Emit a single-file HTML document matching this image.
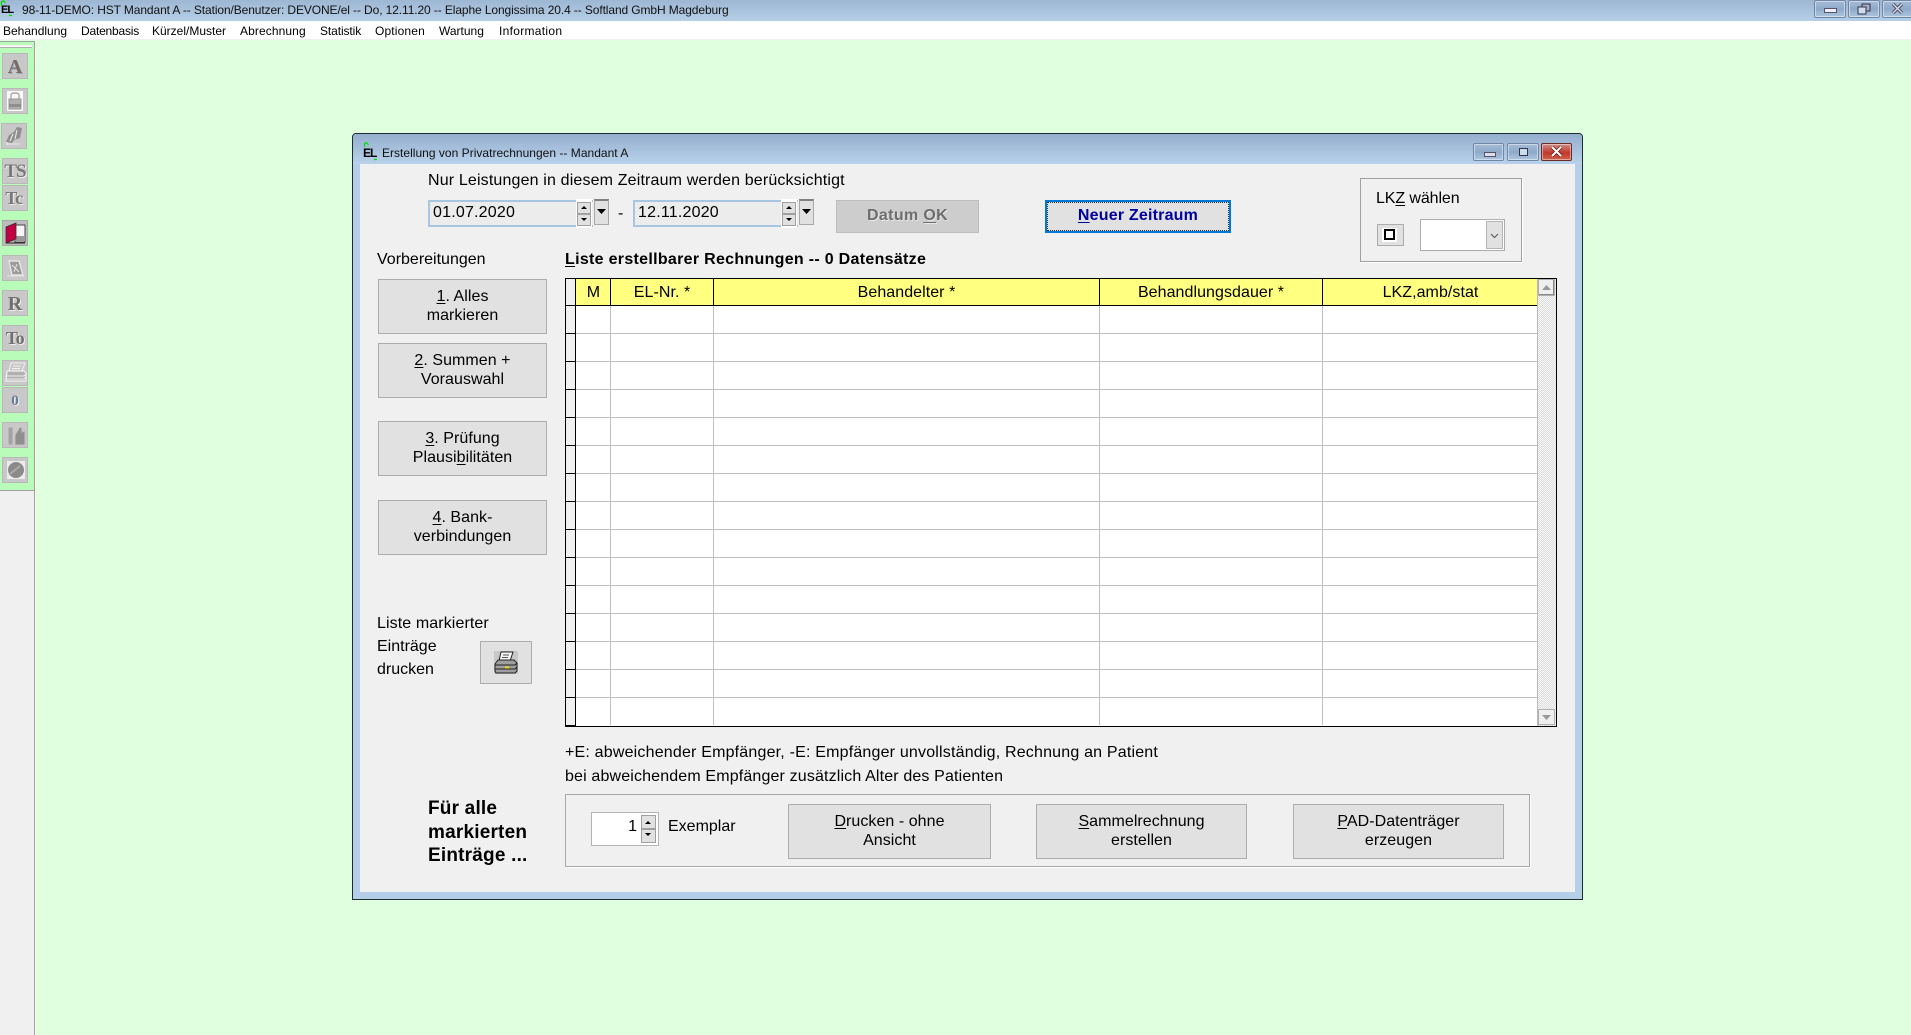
<!DOCTYPE html>
<html lang="de"><head><meta charset="utf-8"><title>Elaphe Longissima</title>
<style>
html,body{margin:0;padding:0}
body{width:1911px;height:1035px;overflow:hidden;position:relative;background:#dfffdf;font-family:"Liberation Sans",Arial,sans-serif;font-size:16px;color:#000}
div,span.a,svg{position:absolute}
.t{white-space:nowrap;line-height:20px}
.u{text-decoration:underline;text-underline-offset:2px}
.btn{background:#e1e1e1;border:1px solid #adadad;box-sizing:border-box;display:flex;align-items:center;justify-content:center;text-align:center;line-height:18.6px;letter-spacing:.05px}
.menu{font-size:12px;top:22px;line-height:18px;white-space:nowrap;color:#000}
.tb{left:2px;width:26px;height:26px;background:#c8c8c8;border:1px solid #b8b8b8;box-sizing:border-box}
.tbt{font-family:"Liberation Serif",serif;font-weight:bold;color:#777;text-align:center;width:100%;left:0;text-shadow:1px 1px 0 #eee}
.wb{box-sizing:border-box;border:1px solid #6f87a4;border-radius:2px;box-shadow:inset 0 0 0 1px rgba(255,255,255,.45);background:linear-gradient(#a5bcd8,#8ea9c9 50%,#adc6e0)}
.arrowbox{background:#e1e1e1;border:1px solid #a0a0a0;box-sizing:border-box}
.h{top:280px;height:24px;line-height:25px;text-align:center;font-size:16px;white-space:nowrap;letter-spacing:.06px}
.vg{top:306px;width:1px;height:419px;background:#c0c0c0}
</style></head>
<body>
<!-- main title bar -->
<div style="left:0;top:0;width:1911px;height:21px;background:linear-gradient(#9db6d2,#b6cfe8)"></div>
<div style="left:1px;top:3px;width:10px;height:13px;color:#000;font:bold 11px/14px 'Liberation Sans',sans-serif;letter-spacing:-1px">EL</div>
<svg style="left:0;top:0" width="14" height="18"><path d="M1.500 6V2L3.500 .8 5.500 3M9 15.500h3" stroke="#00e000" fill="none" stroke-width="1.200"/></svg>
<div class="t" style="left:22px;top:0;font-size:12px;color:#111;line-height:20px;letter-spacing:-.105px">98-11-DEMO: HST Mandant A -- Station/Benutzer: DEVONE/el -- Do, 12.11.20 -- Elaphe Longissima 20.4 -- Softland GmbH Magdeburg</div>
<div class="wb" style="left:1814px;top:0;width:32px;height:18px"></div>
<div style="left:1824px;top:8px;width:11px;height:3px;background:#eef;border:1px solid #556"></div>
<div class="wb" style="left:1848px;top:0;width:32px;height:18px"></div>
<svg style="left:1856px;top:2px" width="16" height="14"><rect x="6" y="2" width="8" height="7" fill="#aac" stroke="#334"/><rect x="2" y="5" width="8" height="7" fill="#cde" stroke="#334"/></svg>
<div class="wb" style="left:1882px;top:0;width:32px;height:18px"></div>
<svg style="left:1891px;top:2px" width="14" height="14"><path d="M2 2L11 11M11 2L2 11" stroke="#445" stroke-width="3.200"/><path d="M2 2L11 11M11 2L2 11" stroke="#dde" stroke-width="1.400"/></svg>
<!-- menu -->
<div style="left:0;top:21px;width:1911px;height:18px;background:#fff"></div>
<div style="left:0;top:39px;width:1911px;height:1px;background:#f0f0f0"></div>
<div class="menu" style="left:3px">Behandlung</div>
<div class="menu" style="left:81px;letter-spacing:-.2px">Datenbasis</div>
<div class="menu" style="left:152px">Kürzel/Muster</div>
<div class="menu" style="left:240px;letter-spacing:.1px">Abrechnung</div>
<div class="menu" style="left:320px;letter-spacing:-.1px">Statistik</div>
<div class="menu" style="left:375px;letter-spacing:.15px">Optionen</div>
<div class="menu" style="left:439px">Wartung</div>
<div class="menu" style="left:499px;letter-spacing:.3px">Information</div>
<!-- toolbar -->
<div style="left:0;top:41px;width:34px;height:449px;background:#b9fcb9"></div>
<div style="left:0;top:490px;width:34px;height:545px;background:#f0f0f0;border-top:1px solid #a0a0a0;box-sizing:border-box"></div>
<div style="left:34px;top:41px;width:1px;height:994px;background:#a0a0a0"></div>
<div style="left:35px;top:41px;width:1px;height:994px;background:#f4fff4"></div>
<div style="left:0;top:41px;width:34px;height:1px;background:#a0a0a0"></div>
<div style="left:0;top:45px;width:32px;height:3px;background:#f4f4f4;border-bottom:1px solid #b0b0b0;box-sizing:border-box"></div>

<div class="tb" style="top:53px"><div class="tbt" style="top:1px;font-size:20px;line-height:24px;color:#7a6a62;text-shadow:1px 1px 0 #9ab">A</div></div>
<div class="tb" style="top:88px"><svg style="left:4px;top:2px" width="16" height="20"><rect width="16" height="20" fill="#f8f8f8"/><path d="M4 8V4q0-2 4-2t4 2v4" fill="none" stroke="#aaa" stroke-width="1.400"/><rect x="2" y="8" width="12" height="10" fill="#b0b0b0" stroke="#999"/><rect x="2" y="13" width="12" height="3" fill="#8e8e8e"/></svg></div>
<div class="tb" style="top:123px;left:1px"><svg style="left:2px;top:2px" width="20" height="20"><path d="M2 16L5 9l5-3 3-5 5 1-2 10-6 2-2 3z" fill="#8f8f8f"/><path d="M6 15L9 8M11 13L13 4M2 18h14M3 16v3" stroke="#e8e8e8" stroke-width="1.100" fill="none"/></svg></div>
<div class="tb" style="top:158px"><div class="tbt" style="top:1px;font-size:19px;line-height:24px;letter-spacing:-1px">TS</div></div>
<div class="tb" style="top:185px"><div class="tbt" style="top:0;font-size:18px;line-height:24px;letter-spacing:-.5px;left:-1px">Tc</div></div>
<div class="tb" style="top:220px;background:#bdbdbd;border-color:#a8a8a8"><svg style="left:2px;top:1px" width="21" height="23"><rect x="10" y="3" width="10" height="17" fill="#f4f4f4" stroke="#444"/><path d="M11 14h8v5h-8z" fill="#999"/><path d="M1 5L11 1V17L1 21z" fill="#c00040" stroke="#333" stroke-width=".8"/><path d="M1 21h19" stroke="#222"/></svg></div>
<div class="tb" style="top:255px"><svg style="left:3px;top:2px" width="20" height="21"><path d="M3 3h10l4 14H6z" fill="#9a9a9a" stroke="#e6e6e6" stroke-width="1.400"/><path d="M6 7l7 7M11 6l-3 8M1 18h17" stroke="#e6e6e6" fill="none"/></svg></div>
<div class="tb" style="top:290px"><div class="tbt" style="top:1px;font-size:20px;line-height:24px;color:#6f6f6f">R</div></div>
<div class="tb" style="top:325px"><div class="tbt" style="top:0;font-size:18px;line-height:24px;letter-spacing:-.5px;color:#6f6f6f">To</div></div>
<div class="tb" style="top:360px"><svg style="left:1px;top:1px" width="23" height="23"><path d="M7 1h14l-3 8H5z" fill="#c8c8c8" stroke="#f0f0f0"/><path d="M9 4h8M8 6.500h8" stroke="#f0f0f0"/><path d="M3 9h17l2 2v8H2z" fill="#b0b0b0" stroke="#f0f0f0" stroke-width="1.200"/><path d="M2 14h18l2-2M2 17h18l2-2" stroke="#f0f0f0" fill="none"/></svg></div>
<div class="tb" style="top:387px"><div class="tbt" style="top:1px;font-size:15px;line-height:24px;color:#6a7a9a">0</div></div>
<div class="tb" style="top:422px"><svg style="left:3px;top:2px" width="21" height="22"><path d="M2 2h5v18H2z" fill="#a2a2a2" stroke="#c8c8c8"/><path d="M9 10l5-8 2 1v4l3-1v14H9z" fill="#8f8f8f" stroke="#c0c0c0"/></svg></div>
<div class="tb" style="top:457px"><svg style="left:4px;top:3px" width="18" height="18"><rect width="18" height="18" fill="#ececec"/><circle cx="9" cy="9" r="8" fill="#8a8a8a"/><path d="M3 13L13 5" stroke="#aaa" stroke-width="2"/></svg></div>

<!-- dialog window -->
<div style="left:352px;top:133px;width:1231px;height:767px;box-sizing:border-box;border:1px solid #1c2c30;border-radius:4px 4px 0 0;background:#b5cfe9"></div>
<div style="left:353px;top:134px;width:1229px;height:30px;border-radius:3px 3px 0 0;background:linear-gradient(#94aecd,#b9d2eb)"></div>
<div style="left:360px;top:164px;width:1215px;height:728px;background:#f0f0f0"></div>
<div style="left:363px;top:146px;width:12px;height:14px;font:bold 12px/14px 'Liberation Sans',sans-serif;letter-spacing:-1px;color:#000">EL</div>
<svg style="left:362px;top:141px" width="16" height="20"><path d="M2.500 6V2.500L4.500 1.500 6.500 4M12 18.500h3" stroke="#00e000" fill="none" stroke-width="1.200"/></svg>
<div class="t" style="left:382px;top:143px;font-size:12px;color:#111;letter-spacing:.02px">Erstellung von Privatrechnungen -- Mandant A</div>
<div class="wb" style="left:1473px;top:143px;width:31px;height:18px"></div>
<div style="left:1484px;top:152px;width:10px;height:3px;border:1px solid #556;background:#dde"></div>
<div class="wb" style="left:1507px;top:143px;width:32px;height:18px"></div>
<div style="left:1519px;top:148px;width:7px;height:6px;border:1px solid #334;background:#cde"></div>
<div class="wb" style="left:1541px;top:143px;width:31px;height:18px;border-color:#6a2a26;background:linear-gradient(#cf8d88,#c0392b 55%,#d0604c)"></div>
<svg style="left:1550px;top:146px" width="14" height="12"><path d="M2 1L11 10M11 1L2 10" stroke="#5a1810" stroke-width="3.400"/><path d="M2 1L11 10M11 1L2 10" stroke="#fff" stroke-width="2"/></svg>

<div class="t" style="left:428px;top:171px;letter-spacing:.155px">Nur Leistungen in diesem Zeitraum werden berücksichtigt</div>

<!-- date 1 -->
<div style="left:428px;top:200px;width:165px;height:27px;box-sizing:border-box;border:2px solid #a9c5e0;border-right:0;background:#ececec"></div>
<div class="t" style="left:433px;top:203px;letter-spacing:.2px">01.07.2020</div>
<div style="left:576px;top:199px;width:16px;height:29px;background:#fff"></div>
<div class="arrowbox" style="left:577px;top:202px;width:14px;height:12px"></div>
<div class="arrowbox" style="left:577px;top:214px;width:14px;height:12px"></div>
<svg style="left:580px;top:205px" width="8" height="18"><path d="M1 4h6L4 1zM1 13h6l-3 3z" fill="#000"/></svg>
<div style="left:594px;top:199px;width:15px;height:26px;background:#e1e1e1;border:1px solid #a8a8a8;border-top:2px solid #808080;box-sizing:border-box"></div>
<svg style="left:597px;top:209px" width="10" height="6"><path d="M0 0h9L4.500 5z" fill="#000"/></svg>
<div class="t" style="left:618px;top:204px">-</div>
<!-- date 2 -->
<div style="left:633px;top:200px;width:165px;height:27px;box-sizing:border-box;border:2px solid #a9c5e0;border-right:0;background:#ececec"></div>
<div class="t" style="left:638px;top:203px;letter-spacing:.2px">12.11.2020</div>
<div style="left:781px;top:199px;width:16px;height:29px;background:#fff"></div>
<div class="arrowbox" style="left:782px;top:202px;width:14px;height:12px"></div>
<div class="arrowbox" style="left:782px;top:214px;width:14px;height:12px"></div>
<svg style="left:785px;top:205px" width="8" height="18"><path d="M1 4h6L4 1zM1 13h6l-3 3z" fill="#000"/></svg>
<div style="left:799px;top:199px;width:15px;height:26px;background:#e1e1e1;border:1px solid #a8a8a8;border-top:2px solid #808080;box-sizing:border-box"></div>
<svg style="left:802px;top:209px" width="10" height="6"><path d="M0 0h9L4.500 5z" fill="#000"/></svg>

<div class="btn" style="left:836px;top:200px;width:143px;height:33px;background:#cdcdcd;border-color:#bdbdbd;color:#6d6d6d;font-weight:bold;text-shadow:1px 1px 0 #e8e8e8;letter-spacing:.35px"><span>Datum <span class="u">O</span>K</span></div>

<div class="btn" style="left:1045px;top:200px;width:186px;height:33px;border:2px solid #0078d7;color:#00009c;font-weight:bold;letter-spacing:.2px"><span><span class="u">N</span>euer Zeitraum</span></div>
<div style="left:1047px;top:202px;width:182px;height:29px;box-sizing:border-box;border:1px dotted #333"></div>

<!-- LKZ box -->
<div style="left:1360px;top:178px;width:162px;height:84px;box-sizing:border-box;border:1px solid #a0a0a0;box-shadow:1px 1px 0 #fff"></div>
<div class="t" style="left:1376px;top:189px;letter-spacing:-.1px">LK<span class="u">Z</span> wählen</div>
<div style="left:1377px;top:224px;width:27px;height:22px;background:#e1e1e1;border:1px solid #adadad;box-sizing:border-box"></div>
<div style="left:1382px;top:228px;width:15px;height:14px;background:#fff"></div>
<div style="left:1384px;top:229px;width:11px;height:11px;border:2px solid #000;box-sizing:border-box;background:#fff"></div>
<div style="left:1420px;top:219px;width:85px;height:32px;background:#fff;border:1px solid #adadad;box-sizing:border-box"></div>
<div style="left:1486px;top:221px;width:17px;height:28px;background:#e1e1e1;border:1px solid #b5b5b5;box-sizing:border-box"></div>
<svg style="left:1490px;top:233px" width="9" height="6"><path d="M1 1L4.500 4.500 8 1" fill="none" stroke="#555"/></svg>

<div class="t" style="left:377px;top:248px;margin-top:2px">Vorbereitungen</div>
<div class="t" style="left:565px;top:250px;font-weight:bold;letter-spacing:.3px"><span class="u">L</span>iste erstellbarer Rechnungen -- 0 Datensätze</div>

<!-- left buttons -->
<div class="btn" style="left:378px;top:279px;width:169px;height:55px"><span><span class="u">1</span>. Alles<br>markieren</span></div>
<div class="btn" style="left:378px;top:343px;width:169px;height:55px"><span><span class="u">2</span>. Summen +<br>Vorauswahl</span></div>
<div class="btn" style="left:378px;top:421px;width:169px;height:55px"><span><span class="u">3</span>. Prüfung<br>Plausi<span class="u">b</span>ilitäten</span></div>
<div class="btn" style="left:378px;top:500px;width:169px;height:55px"><span><span class="u">4</span>. Bank-<br>verbindungen</span></div>

<div class="t" style="left:377px;top:614px;letter-spacing:.1px">Liste markierter</div>
<div class="t" style="left:377px;top:637px">Einträge</div>
<div class="t" style="left:377px;top:660px">drucken</div>
<div class="btn" style="left:480px;top:641px;width:52px;height:43px;background:#e1e1e1"></div>
<svg style="left:494px;top:651px" width="24" height="23"><rect width="24" height="23" fill="#c8c8c8"/><path d="M7 1h12l-3 9H5z" fill="#f8f8f8" stroke="#222"/><path d="M9 4h6M8 6.500h6" stroke="#555"/><path d="M4 9h16l3 3v8l-2 2H2l-1-2v-7z" fill="#9e9e9e" stroke="#222"/><path d="M1 14h20l2-2M1 18h20l2-2" stroke="#222" fill="none"/><rect x="11" y="15.500" width="4" height="2" fill="#f0e000"/></svg>

<!-- table -->
<div style="left:565px;top:278px;width:992px;height:449px;background:#fff"></div>
<div style="left:576px;top:279px;width:962px;height:26px;background:#ffff80"></div>
<div style="left:566px;top:279px;width:10px;height:447px;background:#f0f0f0"></div>
<div style="left:576px;top:306px;width:961px;height:419px;background:repeating-linear-gradient(to bottom,transparent 0,transparent 27px,#c0c0c0 27px,#c0c0c0 28px)"></div>
<div style="left:566px;top:305px;width:10px;height:421px;background:repeating-linear-gradient(to bottom,#000 0,#000 1px,transparent 1px,transparent 28px)"></div>
<div class="vg" style="left:610px"></div><div class="vg" style="left:713px"></div><div class="vg" style="left:1099px"></div><div class="vg" style="left:1322px"></div>
<div style="left:565px;top:305px;width:972px;height:1px;background:#000"></div>
<div style="left:565px;top:278px;width:992px;height:1px;background:#000"></div>
<div style="left:565px;top:278px;width:1px;height:449px;background:#000"></div>
<div style="left:565px;top:726px;width:992px;height:1px;background:#000"></div>
<div style="left:1556px;top:278px;width:1px;height:449px;background:#000"></div>
<div style="left:575px;top:279px;width:1px;height:447px;background:#000"></div>
<div style="left:610px;top:279px;width:1px;height:26px;background:#000"></div>
<div style="left:713px;top:279px;width:1px;height:26px;background:#000"></div>
<div style="left:1099px;top:279px;width:1px;height:26px;background:#000"></div>
<div style="left:1322px;top:279px;width:1px;height:26px;background:#000"></div>
<div class="h" style="left:577px;width:33px">M</div>
<div class="h" style="left:611px;width:102px">EL-Nr. *</div>
<div class="h" style="left:714px;width:385px">Behandelter *</div>
<div class="h" style="left:1100px;width:222px">Behandlungsdauer *</div>
<div class="h" style="left:1323px;width:215px">LKZ,amb/stat</div>
<!-- scrollbar -->
<div style="left:1538px;top:279px;width:18px;height:447px;background:#ececec;background-image:repeating-conic-gradient(#f8f8f8 0 25%,#dcdcdc 0 50%);background-size:2px 2px"></div>
<div style="left:1537px;top:279px;width:1px;height:447px;background:#b8b8b8"></div>
<div class="arrowbox" style="left:1538px;top:279px;width:17px;height:17px;background:#efefef;border-color:#b0b0b0;box-shadow:inset -1px -1px 0 #888"></div>
<svg style="left:1542px;top:285px" width="10" height="6"><path d="M0 5h9L4.500 0z" fill="#999"/></svg>
<div class="arrowbox" style="left:1538px;top:709px;width:17px;height:16px;background:#efefef;border-color:#b0b0b0"></div>
<svg style="left:1542px;top:715px" width="10" height="6"><path d="M0 0h9L4.500 5z" fill="#999"/></svg>

<div class="t" style="left:565px;top:743px;letter-spacing:.19px">+E: abweichender Empfänger, -E: Empfänger unvollständig, Rechnung an Patient</div>
<div class="t" style="left:565px;top:767px;letter-spacing:.15px">bei abweichendem Empfänger zusätzlich Alter des Patienten</div>

<div class="t" style="left:428px;top:797px;font-weight:bold;font-size:19px;line-height:23.500px;letter-spacing:.2px">Für alle<br>markierten<br>Einträge ...</div>

<!-- bottom group -->
<div style="left:565px;top:794px;width:965px;height:73px;box-sizing:border-box;border:1px solid #a8a8a8;box-shadow:1px 1px 0 #fff"></div>
<div style="left:591px;top:812px;width:68px;height:34px;background:#fff;border:1px solid #b4b4b4;box-sizing:border-box"></div>
<div class="t" style="left:622px;top:817px;width:15px;text-align:right">1</div>
<div class="arrowbox" style="left:641px;top:815px;width:15px;height:14px"></div>
<div class="arrowbox" style="left:641px;top:829px;width:15px;height:14px"></div>
<svg style="left:644px;top:819px" width="9" height="20"><path d="M1 5h6L4 2zM1 14h6l-3 3z" fill="#000"/></svg>
<div class="t" style="left:668px;top:817px">Exemplar</div>
<div class="btn" style="left:788px;top:804px;width:203px;height:55px"><span><span class="u">D</span>rucken - ohne<br>Ansicht</span></div>
<div class="btn" style="left:1036px;top:804px;width:211px;height:55px"><span><span class="u">S</span>ammelrechnung<br>erstellen</span></div>
<div class="btn" style="left:1293px;top:804px;width:211px;height:55px"><span><span class="u">P</span>AD-Datenträger<br>erzeugen</span></div>
</body></html>
